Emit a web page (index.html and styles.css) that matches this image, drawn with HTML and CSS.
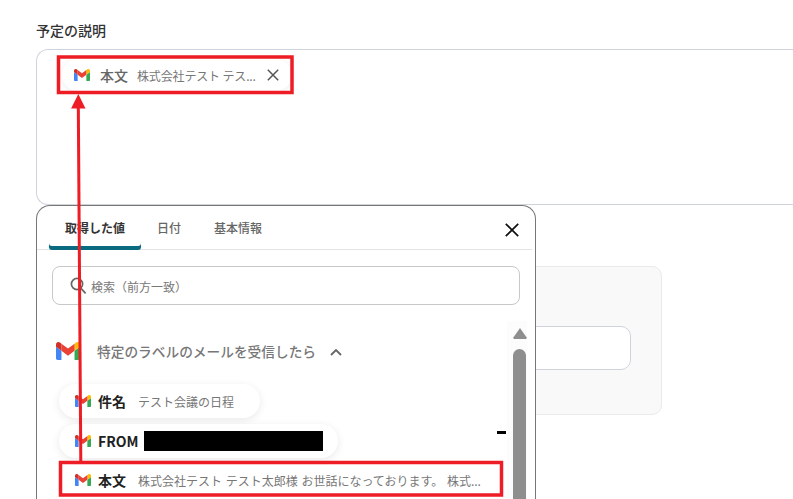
FILE: index.html
```html
<!DOCTYPE html>
<html lang="ja">
<head>
<meta charset="utf-8">
<title>予定の説明</title>
<link rel="stylesheet" href="styles.css">
</head>
<body>
<svg class="defs" width="0" height="0">
  <symbol id="gmail" viewBox="52 42 88 66">
    <path fill="#4285f4" d="M58 108h14V74L52 59v43c0 3.32 2.69 6 6 6"/>
    <path fill="#34a853" d="M120 108h14c3.32 0 6-2.69 6-6V59l-20 15"/>
    <path fill="#fbbc04" d="M120 48v26l20-15v-8c0-7.42-8.47-11.65-14.4-7.2"/>
    <path fill="#ea4335" d="M72 74V48l24 18 24-18v26L96 92"/>
    <path fill="#d3302a" d="M52 51v8l20 15V48l-5.6-4.2c-5.94-4.45-14.4-.22-14.4 7.2"/>
  </symbol>
</svg>
<main class="page">
  <h2 class="field-label">予定の説明</h2>
  <div class="textarea">
    <div class="chip chip-main">
      <svg class="gm"><use href="#gmail"/></svg>
      <span class="chip-name light">本文</span>
      <span class="chip-value">株式会社テスト テス...</span>
      <svg class="chip-x" viewBox="0 0 12 12"><path d="M.8.8l10.4 10.4M11.2.8L.8 11.2"/></svg>
    </div>
  </div>
  <div class="back-card">
    <div class="back-input"></div>
  </div>
</main>

<section class="panel">
  <div class="tabs">
    <span class="tab active">取得した値</span>
    <span class="tab">日付</span>
    <span class="tab">基本情報</span>
    <svg class="close" viewBox="0 0 14 14"><path d="M.8.8l12.4 12.4M13.2.8L.8 13.2"/></svg>
  </div>
  <div class="search">
    <svg class="lens" viewBox="0 0 17 18"><circle cx="7" cy="7" r="5.6"/><path d="M11 11.4l4.6 5"/></svg>
    <span>検索（前方一致）</span>
  </div>
  <div class="list">
    <div class="group">
      <svg class="gm-big"><use href="#gmail"/></svg>
      <span class="group-title">特定のラベルのメールを受信したら</span>
      <svg class="chev" viewBox="0 0 12 7"><path d="M1 6l5-5 5 5"/></svg>
    </div>
    <div class="chip item">
      <svg class="gm"><use href="#gmail"/></svg>
      <span class="chip-name">件名</span>
      <span class="chip-value">テスト会議の日程</span>
    </div>
    <div class="chip item">
      <svg class="gm"><use href="#gmail"/></svg>
      <span class="chip-name">FROM</span>
      <span class="redacted"></span>
    </div>
    <div class="chip item wide">
      <svg class="gm"><use href="#gmail"/></svg>
      <span class="chip-name">本文</span>
      <span class="chip-value">株式会社テスト テスト太郎様 お世話になっております。 株式...</span>
    </div>
    <div class="dash"></div>
    <div class="scrollbar">
      <div class="arrow"></div>
      <div class="thumb"></div>
    </div>
  </div>
</section>

<svg class="marks" viewBox="0 0 793 499">
  <rect x="58.500" y="57" width="233.500" height="35.500"/>
  <rect x="60.500" y="462.500" width="441" height="32.500"/>
  <path class="line" d="M80.800 462L78.300 104"/>
  <path class="head" d="M78.300 94l7.200 14.500h-14.400z"/>
</svg>
</body>
</html>
```
FILE: styles.css
```css
* { box-sizing: border-box; }
html, body { margin: 0; height: 499px; overflow: hidden; background: #fff; }
body { position: relative; font-family: "Noto Sans CJK JP", "Noto Sans", sans-serif; color: #333; }
.defs { position: absolute; }

.page { padding: 21px 0 0 36px; width: 793px; }
.field-label { margin: 0 0 10px; font-size: 14px; line-height: 18px; font-weight: 500; color: #333; }
.textarea {
  height: 156px; padding: 9px 0 0 25px;
  border: 1px solid #cfd4dc; border-right: 0; border-radius: 12px 0 0 12px; background: #fff;
}
.chip {
  display: flex; align-items: center; background: #fff; border-radius: 18px;
  box-shadow: 0 2px 8px rgba(0,0,0,.09);
}
.chip-main { width: 230px; height: 32px; padding-left: 12px; box-shadow: 0 1px 6px rgba(0,0,0,.08); }
.gm { width: 16px; height: 12px; flex: none; }
.chip-name { margin-left: 7px; font-size: 14px; font-weight: 700; color: #222; white-space: nowrap; }
.chip-name.light { margin-left: 10px; font-weight: 500; color: #666; }
.chip-value { margin-left: 12px; font-size: 12px; word-spacing: 1px; color: #777; white-space: nowrap; }
.chip-main .chip-value { margin-left: 9px; word-spacing: 0; letter-spacing: -.15px; }
.chip-x { width: 12px; height: 12px; margin-left: 11px; flex: none; fill: none; stroke: #555; stroke-width: 1.500; }

.back-card {
  width: 602px; height: 149px; margin: 61px 0 0 24px; padding: 59px 0 0 0;
  background: #f9f9fa; border: 1px solid #e9eaec; border-radius: 10px;
}
.back-input { width: 570px; height: 44px; background: #fff; border: 1px solid #cfd4dc; border-radius: 10px; }

.panel {
  position: absolute; left: 36px; top: 205px; width: 500px; height: 294px; overflow: hidden;
  background: #fff; border: 1px solid #777; border-bottom: 0; border-radius: 14px 14px 0 0;
}
.tabs {
  display: flex; height: 44px; padding-left: 12px;
  border-bottom: 1px solid #e3e3e3; position: relative; margin-right: 3px;
}
.tab {
  width: 92px; text-align: center; font-size: 12px; line-height: 44px; font-weight: 500;
  color: #666; white-space: nowrap;
}
.tab + .tab { width: auto; margin-left: 16px; margin-right: 17px; }
.tab.active { color: #333; font-weight: 700; box-shadow: inset 0 -4px 0 #0a6a80; border-radius: 0 0 3px 3px; height: 44px; }
.close {
  position: absolute; right: 13px; top: 17px; width: 14px; height: 14px;
  fill: none; stroke: #111; stroke-width: 1.700;
}
.search {
  display: flex; align-items: center; height: 39px; margin: 16px 15px 0 15px;
  padding: 1px 0 0 17px; border: 1px solid #c8c8c8; border-radius: 8px;
  font-size: 12px; color: #777;
}
.search span { padding-top: 1px; }
.lens { width: 17px; height: 18px; margin-right: 4px; fill: none; stroke: #666; stroke-width: 1.700; }
.list { position: relative; padding-top: 28px; }
.group { display: flex; align-items: center; height: 36px; padding-left: 19px; }
.gm-big { width: 24px; height: 18px; flex: none; }
.group-title { margin-left: 17px; font-size: 13.700px; font-weight: 500; color: #777; white-space: nowrap; }
.chev { width: 12px; height: 7px; margin: 2px 0 0 14px; fill: none; stroke: #666; stroke-width: 1.800; }
.item { width: 201px; height: 34px; margin: 6px 0 0 22px; padding-left: 16px; }
.group + .item { margin-top: 15px; }
.item + .item { width: 279px; }
.item + .item + .item { width: 441px; height: 30px; margin-top: 7px; box-shadow: none; }
.redacted { width: 179px; height: 20px; margin-left: 6px; background: #000; }
.dash { position: absolute; left: 460px; top: 126px; width: 9px; height: 3px; background: #000; }
.scrollbar {
  position: absolute; left: 470px; top: 16px; width: 20px; height: 200px;
  padding: 7px 0 0 6px; background: #fcfcfc;
}
.arrow {
  width: 14px; height: 11px; background: #8e8e8e;
  clip-path: polygon(50% 0, 100% 90%, 92% 100%, 8% 100%, 0 90%);
}
.thumb { width: 13px; height: 160px; margin-top: 10px; background: #8e8e8e; border-radius: 7px; }

.marks { position: absolute; left: 0; top: 0; width: 793px; height: 499px; pointer-events: none; }
.marks rect { fill: none; stroke: #ee1c25; stroke-width: 3.500; }
.marks .line { fill: none; stroke: #ee1c25; stroke-width: 3; }
.marks .head { fill: #ee1c25; }
```
